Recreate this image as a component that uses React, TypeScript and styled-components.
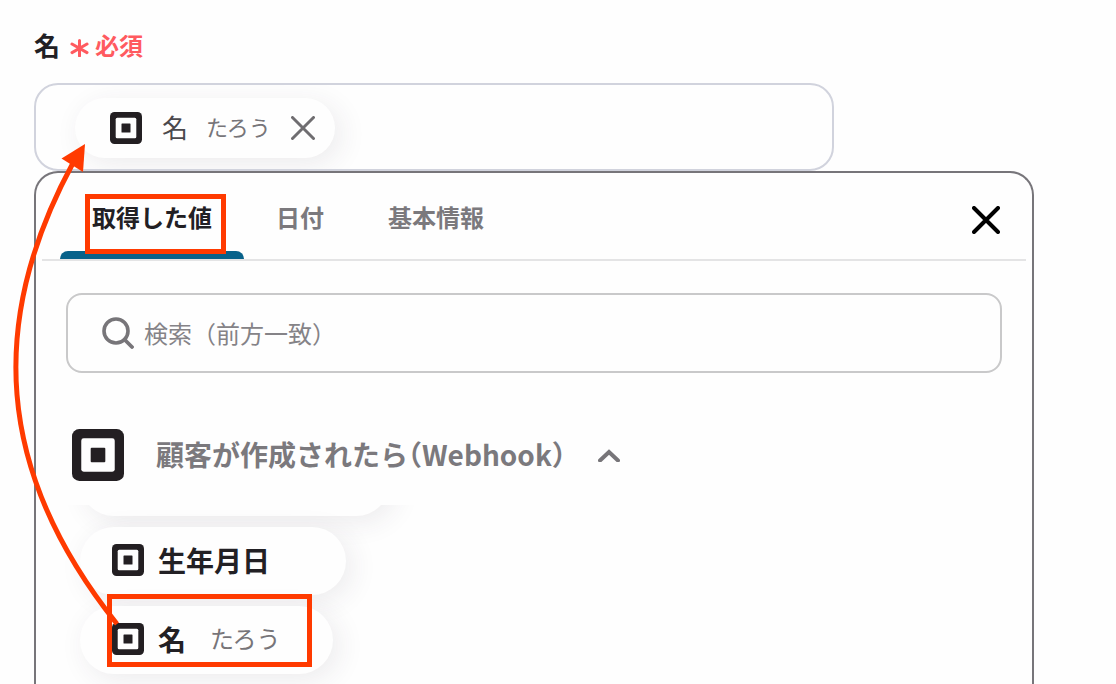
import React from "react";
import styled, { createGlobalStyle, css } from "styled-components";

const MARK = "#ff3a00";

const GlobalStyle = createGlobalStyle`
  *, *::before, *::after { box-sizing: border-box; }
  html { background: #fefefe; }
  body {
    margin: 0;
    font-family: "Noto Sans CJK JP", "Noto Sans", sans-serif;
    color: #222024;
  }
  button, input {
    font: inherit;
    color: inherit;
    border: 0;
    padding: 0;
    margin: 0;
    background: none;
  }
  button { cursor: pointer; }
  svg { display: block; flex: none; }
`;

const Page = styled.main`
  position: relative;
  display: flex;
  flex-direction: column;
  height: 100vh;
  overflow: hidden;
  padding: 28px 82px 0 34px;
`;

const FieldLabel = styled.label`
  display: flex;
  align-items: center;
  gap: 10px;
  height: 36px;
  margin-bottom: 19px;
  padding-bottom: 2px;
  font-size: 26px;
  line-height: 36px;
  font-weight: 700;
`;

const Required = styled.span`
  display: flex;
  align-items: center;
  gap: 6px;
  font-size: 24px;
  color: #ff5a5f;
`;

const Field = styled.div`
  flex: none;
  display: flex;
  align-items: center;
  width: 80%;
  height: 88px;
  padding: 2px 24px 0 39px;
  border: 2px solid #d1d3dd;
  border-radius: 24px;
  overflow: hidden;
`;

const FieldInput = styled.input`
  flex: 1;
  min-width: 0;
  height: 60px;
  outline: none;
  font-size: 24px;
`;

const pill = css`
  display: flex;
  align-items: center;
  background: #fefefe;
  box-shadow: 6px 6px 28px rgba(60, 45, 70, 0.09);
`;

const SelectedChip = styled.span`
  ${pill}
  height: 60px;
  padding: 0 20px 0 35px;
  border-radius: 30px;
`;

const ChipName = styled.span`
  margin: 0 18px 0 20px;
  padding-bottom: 2px;
  font-size: 26px;
  line-height: 36px;
  color: #4a484c;
`;

const ChipValue = styled.span`
  padding-bottom: 4px;
  font-size: 22px;
  line-height: 32px;
  color: #777579;
`;

const IconButton = styled.button`
  display: flex;
`;

const RemoveButton = styled(IconButton)`
  margin-left: 20px;
`;

const CloseButton = styled(IconButton)`
  margin-top: 8px;
`;

const Panel = styled.section`
  flex: 1;
  border: 2px solid #77757a;
  border-bottom: 0;
  border-radius: 24px 24px 0 0;
  background: #fefefe;
`;

const PanelHeader = styled.header`
  display: flex;
  justify-content: space-between;
  align-items: center;
  height: 88px;
  margin: 0 6px;
  padding: 0 26px 0 18px;
  border-bottom: 2px solid #e4e4e5;
`;

const Tabs = styled.div`
  display: flex;
  align-self: stretch;
`;

const Tab = styled.button<{ $active?: boolean }>`
  position: relative;
  padding: 2px 32px 0;
  font-size: 24px;
  line-height: 36px;
  font-weight: 700;
  color: ${(p) => (p.$active ? "#222024" : "#7b797d")};

  ${(p) =>
    p.$active &&
    css`
      &::before {
        content: "";
        position: absolute;
        left: 0;
        right: 0;
        bottom: 0;
        height: 8px;
        border-radius: 8px 8px 0 0;
        background: #08628a;
      }
    `}
`;

const Highlight = styled.span<{ $inset: string }>`
  position: absolute;
  inset: ${(p) => p.$inset};
  border: 5px solid ${MARK};
  pointer-events: none;
`;

const SearchBox = styled.label`
  display: flex;
  align-items: center;
  gap: 10px;
  height: 80px;
  margin: 32px 30px 0;
  padding: 0 32px 0 34px;
  border: 2px solid #c9c9ca;
  border-radius: 16px;
  color: #777579;
`;

const SearchInput = styled.input`
  flex: 1;
  min-width: 0;
  height: 40px;
  padding-bottom: 2px;
  outline: none;
  font-size: 24px;

  &::placeholder {
    color: #858387;
    opacity: 1;
  }
`;

const GroupToggle = styled.button`
  display: flex;
  align-items: center;
  margin: 56px 36px 24px;
  font-size: 28px;
  line-height: 40px;
  font-weight: 700;
  color: #7b797d;
`;

const GroupTitle = styled.span`
  margin: 0 32px;
  padding-bottom: 2px;
  font-feature-settings: "halt";
`;

const ValueList = styled.ul`
  display: flex;
  flex-direction: column;
  align-items: flex-start;
  gap: 11px;
  margin: 0;
  padding: 0 44px 32px;
  overflow: hidden;
  list-style: none;
`;

const ValueItem = styled.li`
  position: relative;
`;

const ScrolledItem = styled.li`
  ${pill}
  width: 310px;
  height: 68px;
  margin-top: -57px;
  border-radius: 34px;
`;

const ValueChip = styled.button<{ $wide?: boolean }>`
  ${pill}
  height: 68px;
  padding: 0 ${(p) => (p.$wide ? 76 : 52)}px 2px 32px;
  border-radius: 34px;
  font-size: 28px;
  line-height: 40px;
  font-weight: 700;
`;

const ValueName = styled.span`
  margin-left: 14px;
`;

const ValueSample = styled.span`
  margin-left: 24px;
  padding-bottom: 2px;
  font-size: 24px;
  font-weight: 400;
  color: #777579;
`;

const Arrow = styled.svg`
  position: absolute;
  left: 0;
  top: 0;
  pointer-events: none;
`;

function SquareLogo({ size }: { size: number }) {
  return (
    <svg width={size} height={size} viewBox="0 0 32 32" aria-hidden="true">
      <rect width="32" height="32" rx="4.5" fill="#231f22" />
      <rect x="5.7" y="5.7" width="20.6" height="20.6" rx="1.5" fill="#fefefe" />
      <rect x="11.5" y="11.5" width="9" height="9" rx="0.6" fill="#231f22" />
    </svg>
  );
}

function Cross({ size, stroke, color }: { size: number; stroke: number; color: string }) {
  const a = stroke / 2;
  const b = size - a;
  return (
    <svg width={size} height={size} aria-hidden="true">
      <path
        d={`M${a} ${a}L${b} ${b}M${b} ${a}L${a} ${b}`}
        stroke={color}
        strokeWidth={stroke}
        strokeLinecap="round"
      />
    </svg>
  );
}

export default function App() {
  return (
    <>
      <GlobalStyle />
      <Page>
        <FieldLabel htmlFor="first-name">
          名
          <Required>
            <svg width="19" height="24" viewBox="0 0 19 24" aria-hidden="true">
              <path
                d="M9.5 7.5v15.5M2 11l15 8.6M17 11L2 19.6"
                stroke="#ff5a5f"
                strokeWidth="3"
                strokeLinecap="round"
              />
            </svg>
            必須
          </Required>
        </FieldLabel>

        <Field>
          <SelectedChip>
            <SquareLogo size={32} />
            <ChipName>名</ChipName>
            <ChipValue>たろう</ChipValue>
            <RemoveButton type="button" aria-label="削除">
              <Cross size={24} stroke={3} color="#6f6d70" />
            </RemoveButton>
          </SelectedChip>
          <FieldInput id="first-name" type="text" />
        </Field>

        <Panel>
          <PanelHeader>
            <Tabs role="tablist">
              <Tab type="button" role="tab" aria-selected="true" $active>
                取得した値
                <Highlight $inset="21px 18px 5px 25px" />
              </Tab>
              <Tab type="button" role="tab" aria-selected="false">
                日付
              </Tab>
              <Tab type="button" role="tab" aria-selected="false">
                基本情報
              </Tab>
            </Tabs>
            <CloseButton type="button" aria-label="閉じる">
              <Cross size={28} stroke={4} color="#000" />
            </CloseButton>
          </PanelHeader>

          <SearchBox>
            <svg width="32" height="32" viewBox="0 0 32 32" fill="none" aria-hidden="true">
              <circle cx="14" cy="14" r="12" stroke="#777579" strokeWidth="3.6" />
              <path d="M22.5 22.5L30 30" stroke="#777579" strokeWidth="3.8" strokeLinecap="round" />
            </svg>
            <SearchInput type="text" aria-label="検索" placeholder="検索（前方一致）" />
          </SearchBox>

          <GroupToggle type="button" aria-expanded="true">
            <SquareLogo size={52} />
            <GroupTitle>顧客が作成されたら（Webhook）</GroupTitle>
            <svg width="22" height="14" viewBox="0 0 22 14" fill="none" aria-hidden="true">
              <path
                d="M2 12.5L11 4L20 12.5"
                stroke="#777579"
                strokeWidth="4"
                strokeLinecap="round"
              />
            </svg>
          </GroupToggle>

          <ValueList>
            <ScrolledItem aria-hidden="true" />
            <ValueItem>
              <ValueChip type="button" $wide>
                <SquareLogo size={32} />
                <ValueName>生年月日</ValueName>
              </ValueChip>
            </ValueItem>
            <ValueItem>
              <ValueChip type="button">
                <SquareLogo size={32} />
                <ValueName>名</ValueName>
                <ValueSample>たろう</ValueSample>
              </ValueChip>
              <Highlight $inset="-12px 21px 7px 27px" />
            </ValueItem>
          </ValueList>
        </Panel>

        <Arrow width="130" height="640" fill="none" aria-hidden="true">
          <path d="M117 624C-6 470 -12 320 73 163" stroke={MARK} strokeWidth="5" />
          <path d="M85 144L61.5 158.5L83 172Z" fill={MARK} />
        </Arrow>
      </Page>
    </>
  );
}
